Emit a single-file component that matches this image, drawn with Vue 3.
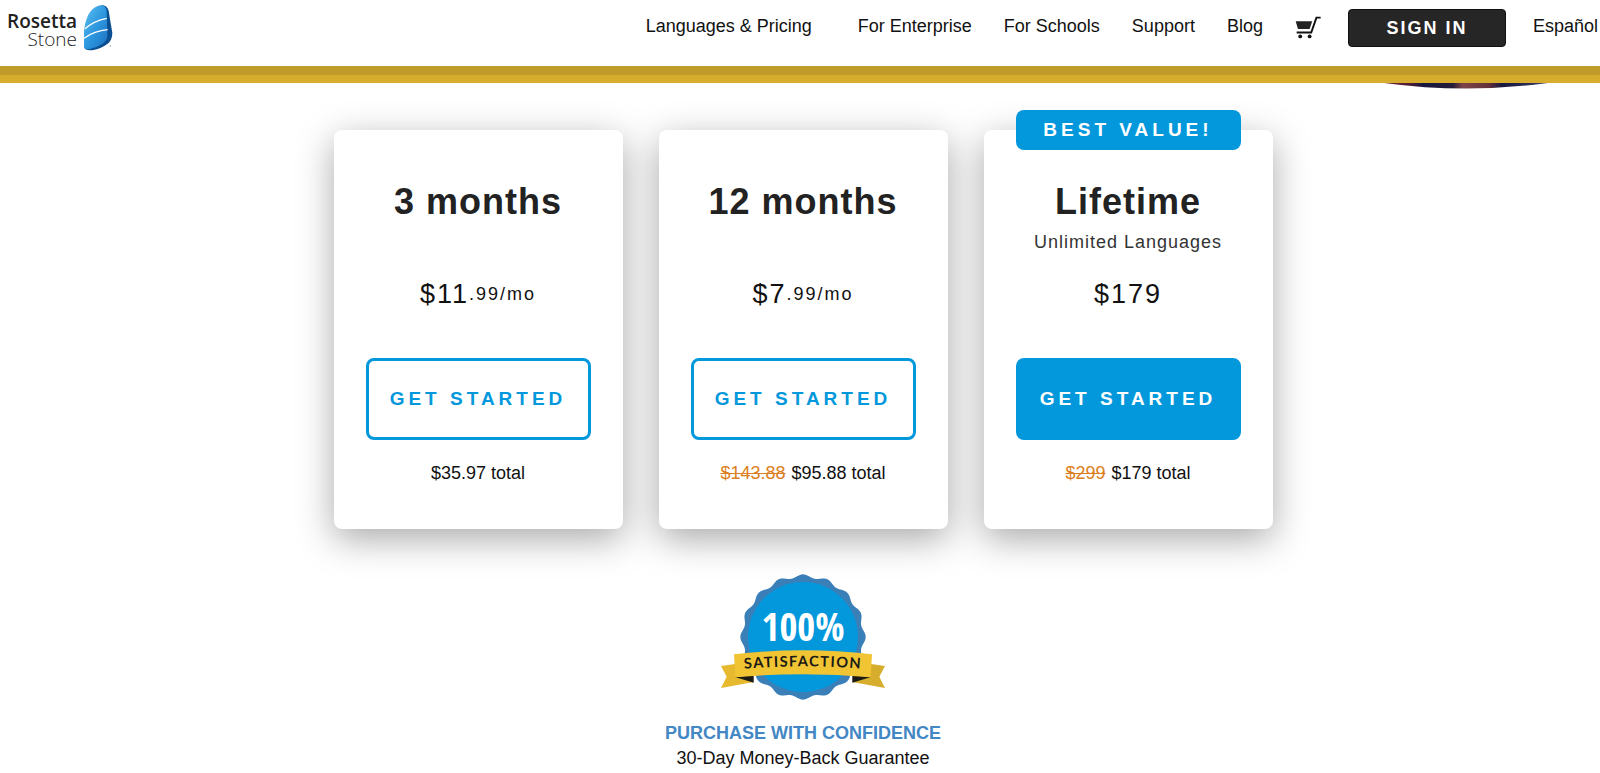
<template>
  <div class="page">
    <header class="site-header">
      <a class="logo" href="#" aria-label="Rosetta Stone home">
        <span class="logo-text">
          <span class="logo-top">Rosetta</span>
          <span class="logo-bottom">Stone</span>
        </span>
        <svg class="logo-mark" viewBox="250 12 90 141" aria-hidden="true">
          <defs>
            <linearGradient id="stone" x1="0" y1="0" x2="1" y2="1">
              <stop offset="0" stop-color="#5cc0f2" />
              <stop offset="0.55" stop-color="#2b95dd" />
              <stop offset="1" stop-color="#1c6fc0" />
            </linearGradient>
          </defs>
          <path d="M306 15 Q322 16 327 32 Q332 64 338 98 Q338 118 326 130 Q306 146 278 151 Q262 151 255 146 L300 90 Z" fill="#0b4f93" />
          <path d="M306 15 Q319 17 321 34 L323 108 Q322 122 309 131 Q290 143 270 147 Q253 149 253 141 L253 96 Q255 66 267 42 Q281 18 306 15 Z" fill="url(#stone)" />
          <path d="M256 86 Q284 62 321 55" stroke="#fff" stroke-width="4" fill="none" />
          <path d="M253 115 Q284 92 324 89" stroke="#fff" stroke-width="4" fill="none" />
          <circle cx="332" cy="138" r="2" fill="#999" />
        </svg>
      </a>

      <nav class="main-nav">
        <a
          v-for="link in links"
          :key="link"
          class="nav-link"
          href="#"
        >{{ link }}</a>
        <a class="cart" href="#" aria-label="Cart">
          <svg viewBox="522 47 80 71" aria-hidden="true">
            <path d="M524 63 H575 L567 87 H531 Z" fill="#222" />
            <path d="M601 52 H588 L572 98 H527" fill="none" stroke="#111" stroke-width="6" />
            <circle cx="538" cy="110" r="6" fill="#111" />
            <circle cx="567" cy="110" r="6" fill="#111" />
          </svg>
        </a>
      </nav>
      <button class="sign-in" type="button">SIGN IN</button>
      <a class="nav-link language" href="#">Español</a>
    </header>

    <div class="gold-bar"></div>

    <main class="pricing">
      <svg class="hero-edge" viewBox="0 0 164 6" aria-hidden="true">
        <defs>
          <linearGradient id="edge">
            <stop offset="0" stop-color="#7a2436" />
            <stop offset="0.16" stop-color="#4d1c35" />
            <stop offset="0.24" stop-color="#15173f" />
            <stop offset="0.42" stop-color="#241c38" />
            <stop offset="0.48" stop-color="#7d4448" />
            <stop offset="0.64" stop-color="#63303a" />
            <stop offset="0.72" stop-color="#15173f" />
            <stop offset="1" stop-color="#3d3f63" />
          </linearGradient>
        </defs>
        <path d="M0 0 H164 Q82 11 0 0 Z" fill="url(#edge)" />
      </svg>

      <div class="plans">
        <section v-for="plan in plans" :key="plan.name" class="plan">
          <div v-if="plan.badge" class="plan-badge">{{ plan.badge }}</div>
          <h2 class="plan-name">{{ plan.name }}</h2>
          <p class="plan-note">{{ plan.note }}</p>
          <p class="plan-price">
            <span>{{ plan.price }}</span>
            <span v-if="plan.cents" class="plan-cents">{{ plan.cents }}</span>
          </p>
          <button class="plan-button" :class="{ filled: plan.badge }" type="button">
            GET STARTED
          </button>
          <p class="plan-total">
            <del v-if="plan.oldTotal">{{ plan.oldTotal }}</del>
            <span>{{ plan.total }} total</span>
          </p>
        </section>
      </div>

      <div class="guarantee">
        <svg class="seal" viewBox="59 42 498 381" role="img" aria-label="100% satisfaction">
          <path :d="sealPath" fill="#3a7fb8" />
          <circle cx="308" cy="231" r="165" fill="#0398dc" />
          <text class="seal-percent" x="308" y="242" text-anchor="middle">100%</text>
          <path d="M62 318 L104 312 L108 351 L160 366 L62 384 L79 350 Z" fill="#e6b92f" />
          <path d="M554 318 L512 312 L508 351 L456 366 L554 384 L537 350 Z" fill="#d6ad2c" />
          <path d="M104 351 L160 346 V368 Z" fill="#1c1a14" />
          <path d="M512 351 L456 346 V368 Z" fill="#1c1a14" />
          <path d="M101 283 Q308 258 515 283 L511 352 Q308 333 105 352 Z" fill="#f0c433" />
          <path id="ribbon-line" d="M106 329 Q308 309 510 329" fill="none" />
          <text class="seal-ribbon" text-anchor="middle">
            <textPath href="#ribbon-line" startOffset="50%">SATISFACTION</textPath>
          </text>
        </svg>
        <p class="guarantee-title">PURCHASE WITH CONFIDENCE</p>
        <p class="guarantee-text">30-Day Money-Back Guarantee</p>
      </div>
    </main>
  </div>
</template>

<script setup>
const links = ['Languages & Pricing', 'For Enterprise', 'For Schools', 'Support', 'Blog']

const plans = [
  { name: '3 months', price: '$11', cents: '.99/mo', total: '$35.97' },
  { name: '12 months', price: '$7', cents: '.99/mo', oldTotal: '$143.88', total: '$95.88' },
  {
    name: 'Lifetime',
    note: 'Unlimited Languages',
    price: '$179',
    oldTotal: '$299',
    total: '$179',
    badge: 'BEST VALUE!',
  },
]

// Wavy outline of the seal: 16 lobes around the centre
const sealPoints = []
for (let i = 0; i < 320; i++) {
  const angle = (i / 320) * Math.PI * 2
  const radius = 183 + 5 * Math.cos(16 * angle)
  const x = 308 + radius * Math.sin(angle)
  const y = 231 - radius * Math.cos(angle)
  sealPoints.push(`${x.toFixed(1)} ${y.toFixed(1)}`)
}
const sealPath = `M${sealPoints.join(' L')} Z`
</script>

<style>
body {
  margin: 0;
  background: #fff;
}
</style>

<style scoped>
.page {
  font-family: "Liberation Sans", Arial, sans-serif;
  font-size: 18px;
  line-height: 24px;
  color: #111;
}

p,
h2 {
  margin: 0;
}

/* Header */
.site-header {
  display: flex;
  align-items: flex-start;
  gap: 27px;
  height: 66px;
  padding: 0 2px 0 7px;
  box-sizing: border-box;
}

.logo {
  display: flex;
  align-items: flex-start;
  gap: 6px;
  margin-right: auto;
  padding-top: 4px;
  color: #222;
  text-decoration: none;
}

.logo-text {
  display: flex;
  flex-direction: column;
  align-items: flex-end;
  padding-top: 8px;
  font-family: "Open Sans", "Noto Sans", sans-serif;
  font-size: 19px;
  line-height: 18px;
}

.logo-top {
  font-weight: 600;
}

.logo-bottom {
  font-weight: 300;
}

.logo-mark {
  width: 30px;
  height: 47px;
}

.main-nav {
  display: flex;
  gap: 32px;
}

.nav-link {
  padding-top: 14px;
  color: #111;
  text-decoration: none;
  white-space: nowrap;
}

.main-nav .nav-link:first-child {
  margin-right: 14px;
}

.cart {
  padding-top: 16px;
}

.cart svg {
  display: block;
  width: 26px;
  height: 23px;
}

.sign-in {
  width: 158px;
  height: 38px;
  margin-top: 9px;
  padding: 0;
  border: 1px solid #111;
  border-radius: 4px;
  background: #262626;
  color: #fff;
  font: bold 18px "Liberation Sans", Arial, sans-serif;
  letter-spacing: 2px;
  cursor: pointer;
}

.gold-bar {
  height: 9px;
  border-bottom: 8px solid #d6ad2c;
  background: #bf9c2a;
}

/* Plans */
.pricing {
  position: relative;
  padding: 47px 0 0 6px;
}

.hero-edge {
  position: absolute;
  top: 0;
  right: 52px;
  width: 164px;
  height: 6px;
}

.plans {
  display: flex;
  justify-content: center;
  gap: 36px;
}

.plan {
  position: relative;
  display: flex;
  flex-direction: column;
  align-items: center;
  width: 289px;
  padding: 50px 32px 44px;
  box-sizing: border-box;
  border-radius: 8px;
  background: #fff;
  box-shadow: 0 10px 36px rgba(0, 0, 0, 0.34);
}

.plan-badge {
  position: absolute;
  top: -20px;
  left: 32px;
  right: 32px;
  border-radius: 8px;
  background: #0398dc;
  color: #fff;
  font-size: 19px;
  font-weight: bold;
  line-height: 40px;
  letter-spacing: 4px;
  text-align: center;
}

.plan-name {
  font-size: 36px;
  line-height: 44px;
  letter-spacing: 1px;
  color: #222;
}

.plan-note {
  min-height: 24px;
  margin-top: 6px;
  color: #333;
  letter-spacing: 1px;
}

.plan-price {
  display: flex;
  align-items: center;
  margin-top: 23px;
  font-size: 27px;
  line-height: 34px;
  letter-spacing: 2px;
}

.plan-cents {
  font-size: 18px;
}

.plan-button {
  align-self: stretch;
  height: 82px;
  margin-top: 47px;
  padding: 0;
  border: 3px solid #0398dc;
  border-radius: 8px;
  background: #fff;
  color: #0398dc;
  font: bold 19px "Liberation Sans", Arial, sans-serif;
  letter-spacing: 4px;
  cursor: pointer;
}

.plan-button.filled {
  background: #0398dc;
  color: #fff;
}

.plan-total {
  display: flex;
  gap: 6px;
  margin-top: 21px;
}

.plan-total del {
  color: #dc7f22;
}

/* Guarantee */
.guarantee {
  display: flex;
  flex-direction: column;
  align-items: center;
  margin-top: 45px;
  line-height: 25px;
}

.seal {
  width: 166px;
  height: 127px;
}

.seal-percent {
  fill: #fff;
  font-family: "Liberation Sans Narrow", "Open Sans Condensed", "Liberation Sans", sans-serif;
  font-size: 116px;
  font-weight: bold;
}

.seal-ribbon {
  fill: #1c1a14;
  font-family: Lato, sans-serif;
  font-size: 44px;
  font-weight: bold;
  letter-spacing: 4px;
}

.guarantee-title {
  margin-top: 20px;
  color: #4387c4;
  font-weight: bold;
}
</style>
